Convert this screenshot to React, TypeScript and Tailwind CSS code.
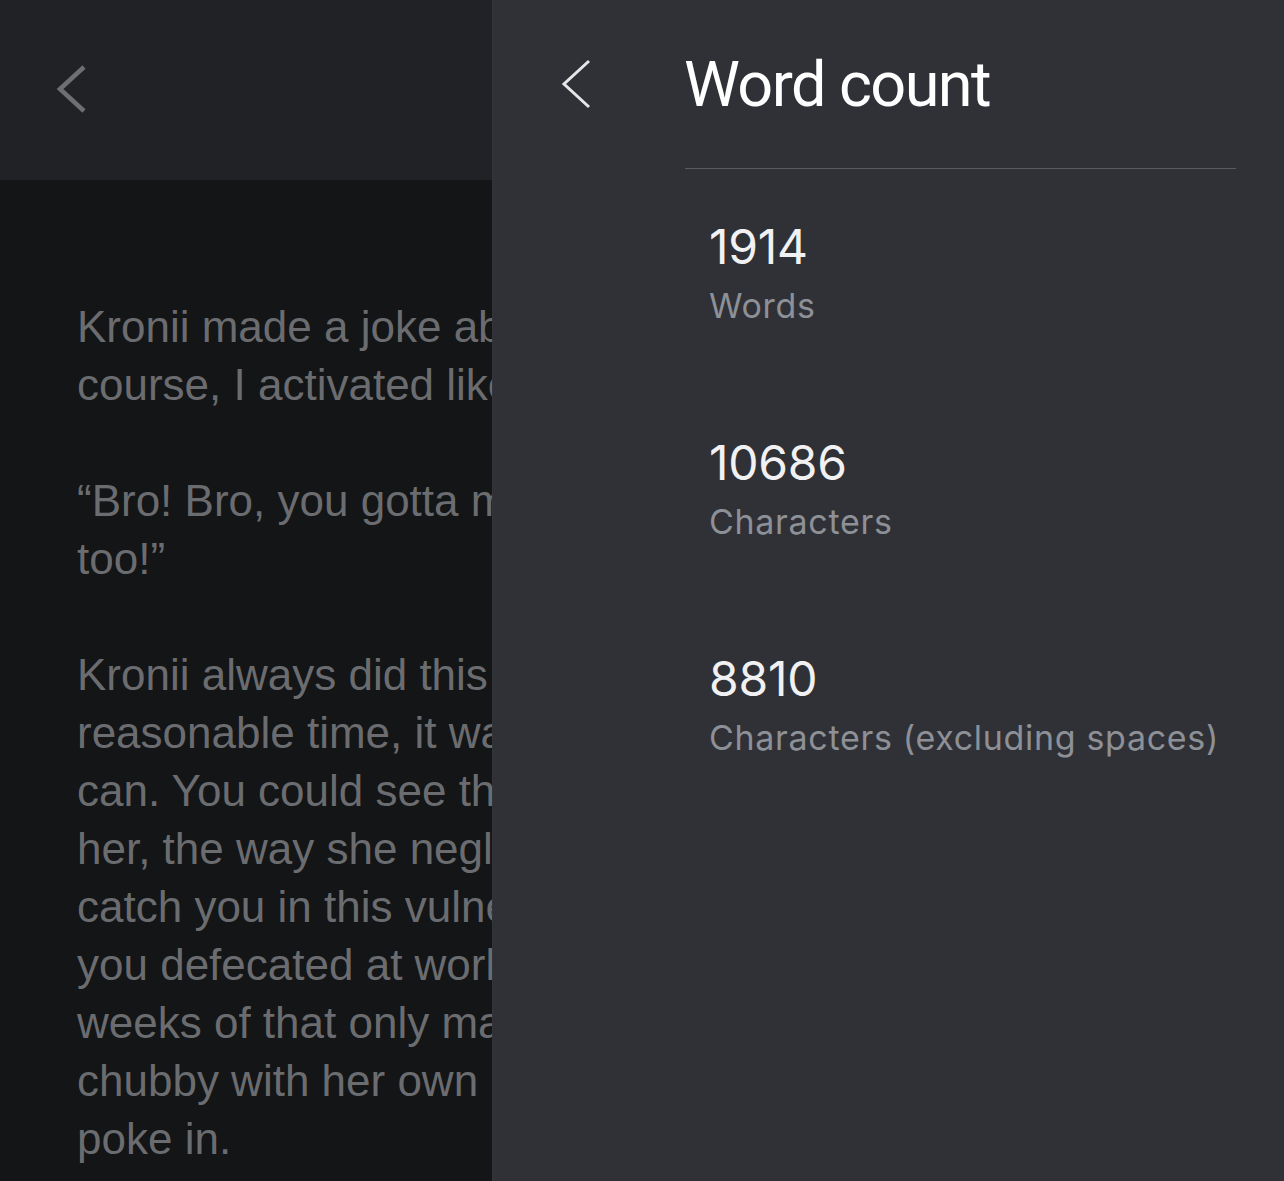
import React from "react";

const lines: string[] = [
  "Kronii made a joke about it, and of",
  "course, I activated like a trap card.",
  "",
  "\u201CBro! Bro, you gotta make fun of me",
  "too!\u201D",
  "",
  "Kronii always did this to me. At any",
  "reasonable time, it was whenever she",
  "can. You could see the glint in",
  "her, the way she neglected to",
  "catch you in this vulnerable state,",
  "you defecated at work, the",
  "weeks of that only made her",
  "chubby with her own",
  "poke in.",
];

const stats = [
  { n: "1914", label: "Words" },
  { n: "10686", label: "Characters" },
  { n: "8810", label: "Characters (excluding spaces)" },
];

export default function App() {
  return (
    <div className="flex w-[1284px] h-[1181px] overflow-hidden bg-[#131517]">
      {/* Left document pane */}
      <div className="w-[492px] shrink-0 flex flex-col overflow-hidden">
        <div className="h-[180px] bg-[#212226] flex items-center pl-[56px] pb-[2px]">
          <svg width="32" height="50" viewBox="0 0 32 50" fill="none">
            <path d="M28 3 L4 25 L28 47" stroke="#6e6f73" strokeWidth="4.5" strokeLinecap="butt" strokeLinejoin="miter" />
          </svg>
        </div>
        <div
          className="pt-[118px] pl-[77px] text-[44px] leading-[58px] text-[#6b6c6f] whitespace-nowrap"
          style={{ fontFamily: '"Liberation Sans", Arial, sans-serif' }}
        >
          {lines.map((l, i) => (
            <div key={i} className="h-[58px]">
              {l}
            </div>
          ))}
        </div>
      </div>

      {/* Right word count panel */}
      <div className="flex-1 bg-[#303136] border-l border-[#34353a] flex flex-col">
        <div className="h-[168px] flex items-start pt-[56px]">
          <div className="w-[191px] shrink-0 pl-[67px] pt-[3px]">
            <svg width="34" height="50" viewBox="0 0 34 50" fill="none">
              <path d="M29 2 L4 25 L29 48" stroke="#e6e6e8" strokeWidth="3" strokeLinecap="butt" strokeLinejoin="miter" />
            </svg>
          </div>
          <div
            className="text-[63px] leading-[60px] text-white tracking-[-0.025em] -mt-[1px]"
            style={{ fontFamily: 'Roboto, "Noto Sans", sans-serif' }}
          >
            Word count
          </div>
        </div>
        <div className="ml-[192px] mr-[48px] h-px bg-[#5b5c60]" />
        <div
          className="pl-[216px] pt-[51px] flex flex-col gap-[110px]"
          style={{ fontFamily: 'Inter, "Noto Sans", sans-serif' }}
        >
          {stats.map((s) => (
            <div key={s.n} className="flex flex-col">
              <div className="text-[48px] leading-[54px] text-[#f1f1f3] tracking-[-0.005em]">{s.n}</div>
              <div className="text-[34px] leading-[40px] text-[#8d9096] tracking-[0.02em] mt-[12px]">{s.label}</div>
            </div>
          ))}
        </div>
      </div>
    </div>
  );
}
